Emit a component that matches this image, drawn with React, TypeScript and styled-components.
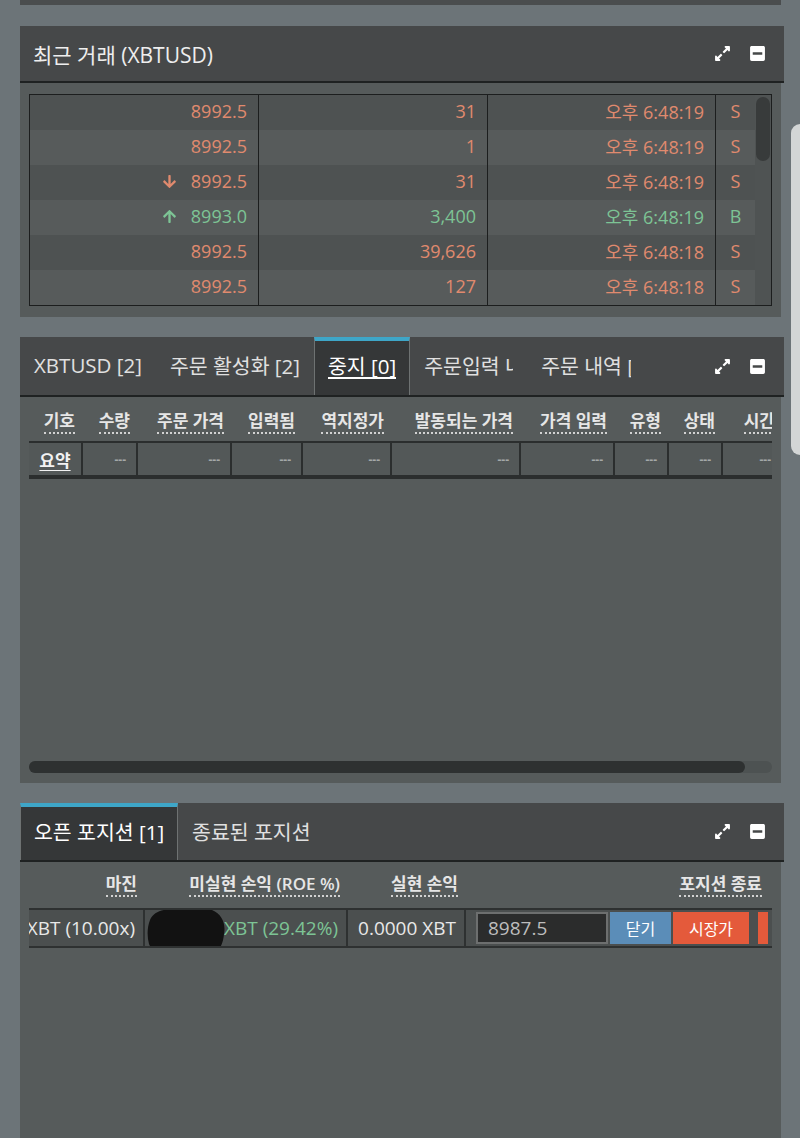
import React from 'react';
import styled, { createGlobalStyle, css } from 'styled-components';
import { FaExpandAlt, FaMinusSquare, FaArrowDown, FaArrowUp } from 'react-icons/fa';

const GlobalStyle = createGlobalStyle`
  body {
    margin: 0;
    background: #6c7478;
    font-family: "Open Sans", "Noto Sans CJK KR", sans-serif;
  }
`;

const SELL = '#e08a6e';
const BUY = '#7dc495';
const LINE = '#1f2222';

const Page = styled.div`
  position: relative;
  min-height: 1138px;
  box-sizing: border-box;
  padding: 0 19px 0 20px;
  display: flex;
  flex-direction: column;
  gap: 20px;
  overflow: hidden;
`;

const PrevPanelEdge = styled.div`
  height: 5px;
  margin-bottom: 1px;
  background: #4a4d4e;
`;

const Panel = styled.section<{ $height?: number }>`
  background: #565b5b;
  display: flex;
  flex-direction: column;
  ${p => (p.$height ? css`height: ${p.$height}px;` : css`flex: 1;`)}
`;

const PanelHeader = styled.header<{ $height: number }>`
  height: ${p => p.$height}px;
  box-sizing: border-box;
  display: flex;
  align-items: stretch;
  background: #464849;
  border-bottom: 2px solid ${LINE};
  margin-right: -3px;
  padding-right: 3px;
`;

const Title = styled.h2`
  margin: 0;
  padding-left: 13px;
  display: flex;
  align-items: center;
  font-size: 21px;
  font-weight: 400;
  color: #eeeeee;
`;

const Tab = styled.div<{ $active?: boolean }>`
  display: flex;
  align-items: center;
  padding: 0 13px 6px;
  font-size: 20.5px;
  color: #e0e0e0;
  white-space: nowrap;
  border-top: 4px solid transparent;
  border-left: 1px solid transparent;
  border-right: 1px solid transparent;
  ${p =>
    p.$active &&
    css`
      background: #353738;
      border-top-color: #3ea6c8;
      border-left-color: #6e7272;
      border-right-color: #6e7272;
      color: #ffffff;
    `}
`;

const TabLabel = styled.span<{ $underline?: boolean; $clip?: number }>`
  display: block;
  overflow: hidden;
  ${p => p.$underline && css`text-decoration: underline; text-underline-offset: 3px;`}
  ${p => p.$clip && css`max-width: ${p.$clip}px;`}
`;

const HeaderTools = styled.div`
  margin-left: auto;
  display: flex;
  align-items: center;
  gap: 18px;
  padding-right: 15px;
  color: #ffffff;
`;

/* recent trades */

const TradeBody = styled.div`
  padding: 11px 9px;
`;

const TradeTable = styled.div`
  display: flex;
  border: 1px solid #1c1e1e;
`;

const TradeRows = styled.div`
  flex: 1;
`;

const TradeRow = styled.div<{ $odd: boolean }>`
  display: grid;
  grid-template-columns: 229px 229px 228px 1fr;
  height: 35px;
  background: ${p => (p.$odd ? '#4e5252' : '#575b5b')};
`;

const TradeCell = styled.div<{ $side: 'S' | 'B'; $center?: boolean }>`
  display: flex;
  align-items: center;
  justify-content: ${p => (p.$center ? 'center' : 'flex-end')};
  gap: 14px;
  padding-right: ${p => (p.$center ? 0 : 11)}px;
  padding-bottom: 3px;
  font-size: 18px;
  color: ${p => (p.$side === 'S' ? SELL : BUY)};
  border-right: 1px solid #1c1e1e;
  &:last-child {
    border-right: none;
  }
`;

const VTrack = styled.div`
  width: 16px;
  padding: 2px 1px;
  box-sizing: border-box;
  background: #4f5353;
`;

const VThumb = styled.div`
  height: 64px;
  border-radius: 7px;
  background: #383b3b;
`;

/* orders */

const OrdersBody = styled.div`
  flex: 1;
  display: flex;
  flex-direction: column;
  padding: 6px 9px 10px;
`;

const GridRow = styled.div<{ $cols: string }>`
  display: grid;
  grid-template-columns: ${p => p.$cols};
  overflow: hidden;
`;

const HeadCell = styled.div`
  height: 38px;
  display: flex;
  align-items: center;
  justify-content: flex-end;
  padding-right: 8px;
  white-space: nowrap;
`;

const HeadLabel = styled.span`
  font-size: 17px;
  font-weight: 600;
  color: #e6e6e6;
  line-height: 20px;
  border-bottom: 2px dotted #d2d2d2;
  padding-bottom: 1px;
`;

const SummaryRow = styled(GridRow)`
  border-top: 2px solid #2b2e2e;
  border-bottom: 4px solid #2b2e2e;
`;

const SummaryCell = styled.div<{ $label?: boolean }>`
  height: 32px;
  display: flex;
  align-items: center;
  justify-content: ${p => (p.$label ? 'center' : 'flex-end')};
  padding-right: ${p => (p.$label ? 0 : 10)}px;
  border-right: 2px solid #2b2e2e;
  background: #535858;
  font-size: ${p => (p.$label ? 17 : 12)}px;
  font-weight: 700;
  color: ${p => (p.$label ? '#f2f2f2' : '#a4a8a8')};
  ${p => p.$label && css`text-decoration: underline; text-underline-offset: 3px;`}
`;

const HScroll = styled.div`
  margin-top: auto;
  height: 12px;
  border-radius: 6px;
  background: #4d5252;
`;

const HThumb = styled.div`
  height: 100%;
  border-radius: 6px;
  background: #2e3131;
`;

/* positions */

const PositionsBody = styled.div`
  padding: 0 9px;
`;

const PosHeadCell = styled(HeadCell)<{ $pad?: number }>`
  height: 46px;
  padding-right: ${p => p.$pad ?? 8}px;
`;

const PosRow = styled(GridRow)`
  border-top: 2px solid #2e3131;
  border-bottom: 2px solid #2e3131;
`;

const PosCell = styled.div<{ $color?: string; $clip?: boolean }>`
  position: relative;
  height: 36px;
  display: flex;
  align-items: center;
  justify-content: flex-end;
  padding-right: 8px;
  overflow: ${p => (p.$clip ? 'hidden' : 'visible')};
  white-space: nowrap;
  border-right: 2px solid #2e3131;
  background: #4b4f4f;
  font-size: 19px;
  color: ${p => p.$color || '#e8e8e8'};
  & > span {
    flex-shrink: 0;
    position: relative;
  }
`;

const Redacted = styled.svg`
  position: absolute;
  left: 1px;
  top: -8px;
  z-index: 1;
`;

const CloseCell = styled.div`
  display: flex;
  align-items: stretch;
  gap: 2px;
  padding: 2px 0 2px 10px;
  background: #4b4f4f;
  height: 36px;
  box-sizing: border-box;
`;

const PriceInput = styled.input`
  width: 132px;
  box-sizing: border-box;
  background: #2b2c2c;
  border: 2px solid #6d6f6f;
  color: #bdbdbd;
  font-family: inherit;
  font-size: 19px;
  padding: 0 10px;
  outline: none;
`;

const ActionButton = styled.button<{ $tone: 'blue' | 'orange'; $width: number }>`
  width: ${p => p.$width}px;
  border: none;
  font-family: inherit;
  font-size: 16px;
  color: #ffffff;
  background: ${p => (p.$tone === 'blue' ? '#5b8db8' : '#e45a3b')};
`;

const ButtonStub = styled.div`
  width: 10px;
  margin-left: 7px;
  background: #e45a3b;
`;

const EdgeIndicator = styled.div`
  position: absolute;
  right: 0;
  top: 124px;
  width: 9px;
  height: 331px;
  border-radius: 9px 0 0 9px;
  background: #d3d6d6;
`;

const trades: { price: string; size: string; time: string; side: 'S' | 'B'; tick?: 'up' | 'down' }[] = [
  { price: '8992.5', size: '31', time: '오후 6:48:19', side: 'S' },
  { price: '8992.5', size: '1', time: '오후 6:48:19', side: 'S' },
  { price: '8992.5', size: '31', time: '오후 6:48:19', side: 'S', tick: 'down' },
  { price: '8993.0', size: '3,400', time: '오후 6:48:19', side: 'B', tick: 'up' },
  { price: '8992.5', size: '39,626', time: '오후 6:48:18', side: 'S' },
  { price: '8992.5', size: '127', time: '오후 6:48:18', side: 'S' },
];

const orderCols = '54px 55px 94px 71px 89px 129px 94px 54px 54px 60px';
const orderHeads = ['기호', '수량', '주문 가격', '입력됨', '역지정가', '발동되는 가격', '가격 입력', '유형', '상태', '시간'];

const posCols = '116px 203px 118px 1fr';

function Tools() {
  return (
    <HeaderTools>
      <FaExpandAlt size={17} />
      <FaMinusSquare size={17} />
    </HeaderTools>
  );
}

export default function App() {
  return (
    <Page>
      <GlobalStyle />
      <PrevPanelEdge />

      <Panel $height={291}>
        <PanelHeader $height={57}>
          <Title>최근 거래 (XBTUSD)</Title>
          <Tools />
        </PanelHeader>
        <TradeBody>
          <TradeTable>
            <TradeRows>
              {trades.map((t, i) => (
                <TradeRow key={i} $odd={i % 2 === 0}>
                  <TradeCell $side={t.side}>
                    {t.tick === 'down' && <FaArrowDown size={15} />}
                    {t.tick === 'up' && <FaArrowUp size={15} />}
                    {t.price}
                  </TradeCell>
                  <TradeCell $side={t.side}>{t.size}</TradeCell>
                  <TradeCell $side={t.side}>{t.time}</TradeCell>
                  <TradeCell $side={t.side} $center>{t.side}</TradeCell>
                </TradeRow>
              ))}
            </TradeRows>
            <VTrack>
              <VThumb />
            </VTrack>
          </TradeTable>
        </TradeBody>
      </Panel>

      <Panel $height={446}>
        <PanelHeader $height={60}>
          <Tab>XBTUSD [2]</Tab>
          <Tab>주문 활성화 [2]</Tab>
          <Tab $active>
            <TabLabel $underline>중지 [0]</TabLabel>
          </Tab>
          <Tab>
            <TabLabel $clip={89}>주문입력 내역 [0]</TabLabel>
          </Tab>
          <Tab>
            <TabLabel $clip={90}>주문 내역 [0]</TabLabel>
          </Tab>
          <Tools />
        </PanelHeader>
        <OrdersBody>
          <GridRow $cols={orderCols}>
            {orderHeads.map(h => (
              <HeadCell key={h}>
                <HeadLabel>{h}</HeadLabel>
              </HeadCell>
            ))}
          </GridRow>
          <SummaryRow $cols={orderCols}>
            <SummaryCell $label>요약</SummaryCell>
            {orderHeads.slice(1).map(h => (
              <SummaryCell key={h}>---</SummaryCell>
            ))}
          </SummaryRow>
          <HScroll>
            <HThumb style={{ width: '96.4%' }} />
          </HScroll>
        </OrdersBody>
      </Panel>

      <Panel>
        <PanelHeader $height={59}>
          <Tab $active>오픈 포지션 [1]</Tab>
          <Tab>종료된 포지션</Tab>
          <Tools />
        </PanelHeader>
        <PositionsBody>
          <GridRow $cols={posCols}>
            <PosHeadCell>
              <HeadLabel>마진</HeadLabel>
            </PosHeadCell>
            <PosHeadCell>
              <HeadLabel>미실현 손익 (ROE %)</HeadLabel>
            </PosHeadCell>
            <PosHeadCell>
              <HeadLabel>실현 손익</HeadLabel>
            </PosHeadCell>
            <PosHeadCell $pad={10}>
              <HeadLabel>포지션 종료</HeadLabel>
            </PosHeadCell>
          </GridRow>
          <PosRow $cols={posCols}>
            <PosCell $clip>
              <span>XBT (10.00x)</span>
            </PosCell>
            <PosCell $color={BUY}>
              <span>XBT (29.42%)</span>
              <Redacted width="80" height="54" viewBox="0 0 80 54">
                <path
                  d="M4 18 C8 8 22 6 32 8 C40 2 56 2 66 8 C76 12 80 22 78 32 C77 42 74 50 64 52 C52 54 40 50 30 52 C18 54 6 50 3 42 C1 34 1 26 4 18 Z"
                  fill="#121212"
                />
              </Redacted>
            </PosCell>
            <PosCell $clip>
              <span>0.0000 XBT</span>
            </PosCell>
            <CloseCell>
              <PriceInput defaultValue="8987.5" />
              <ActionButton $tone="blue" $width={61}>닫기</ActionButton>
              <ActionButton $tone="orange" $width={76}>시장가</ActionButton>
              <ButtonStub />
            </CloseCell>
          </PosRow>
        </PositionsBody>
      </Panel>

      <EdgeIndicator />
    </Page>
  );
}
